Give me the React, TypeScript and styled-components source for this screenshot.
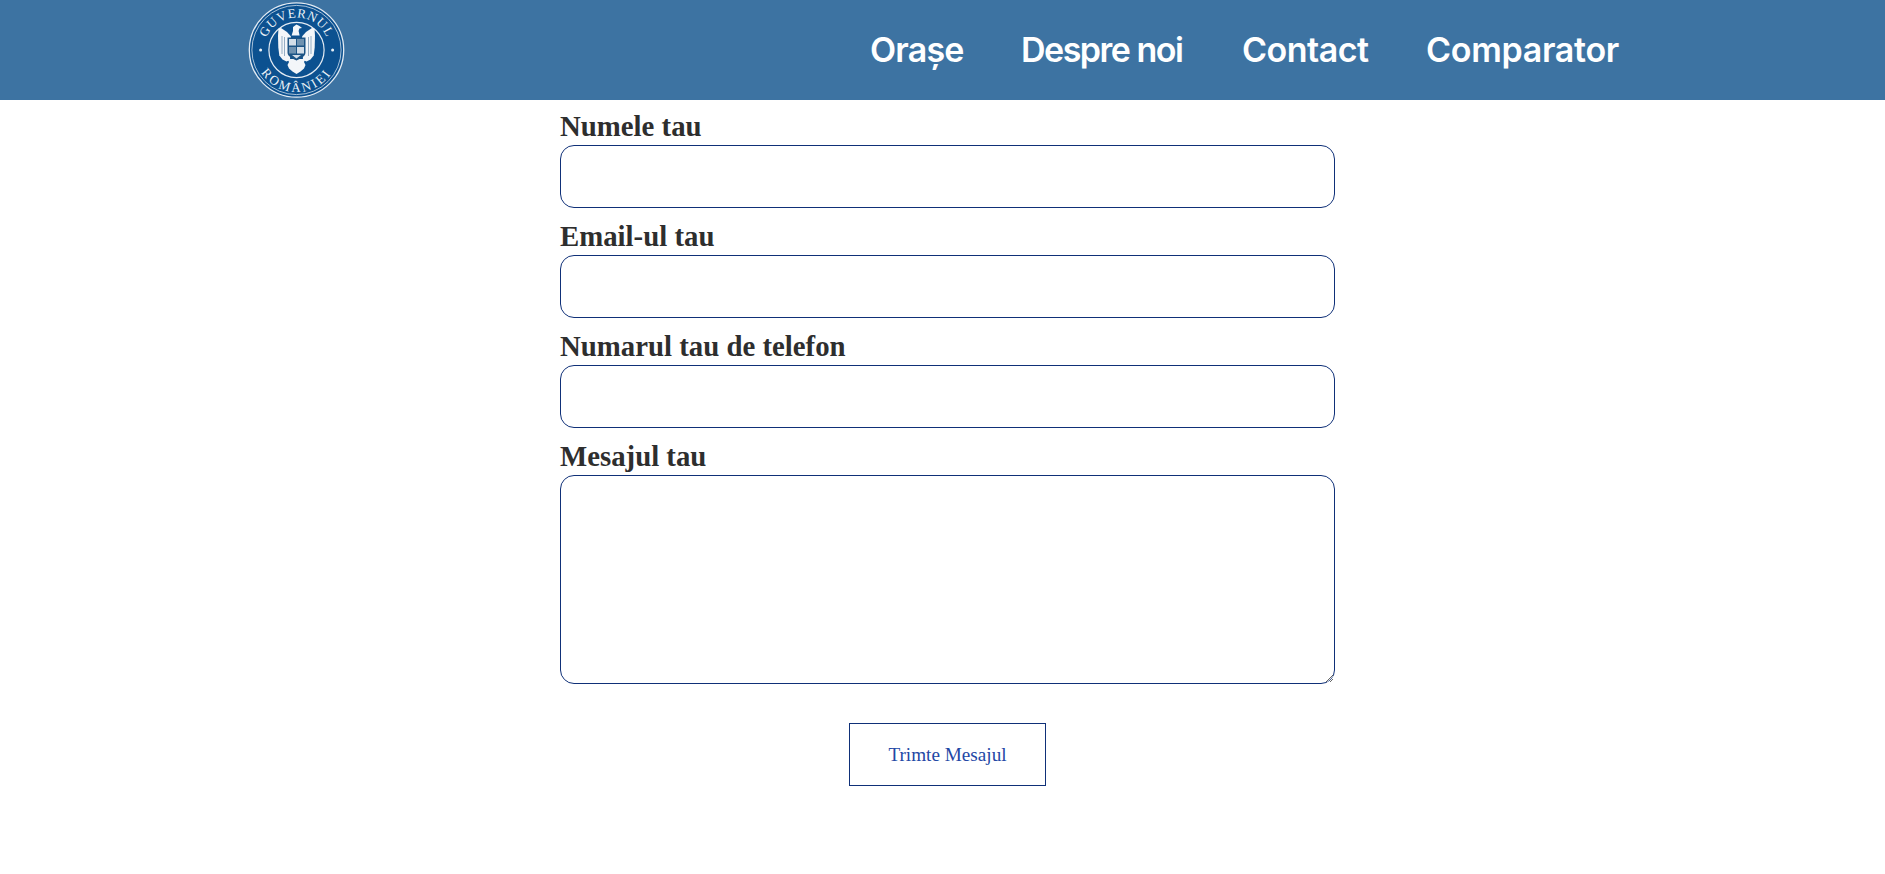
import React from "react";
import styled, { createGlobalStyle } from "styled-components";

const Global = createGlobalStyle`
  * { box-sizing: border-box; }
  html, body { margin: 0; padding: 0; background: #fff; }
  body { font-family: "Liberation Serif", "Times New Roman", serif; }
`;

const Header = styled.header`
  height: 100px;
  background: #3d73a2;
  display: flex;
  align-items: center;
  justify-content: space-between;
  padding: 0 266px 0 248px;
`;

const Nav = styled.nav`
  display: grid;
  grid-template-columns: 93px 163px 126px 193px;
  column-gap: 58px;
  margin-top: -2px;
`;

const NavLink = styled.a<{ $spacing: number }>`
  font-family: Inter, "Noto Sans", sans-serif;
  font-weight: 600;
  font-size: 34px;
  letter-spacing: ${(p) => p.$spacing}px;
  white-space: nowrap;
  color: #fff;
  text-decoration: none;
`;

const Form = styled.form`
  width: 775px;
  margin-left: 560px;
  padding-top: 9px;
  display: flex;
  flex-direction: column;
`;

const Field = styled.div`
  display: flex;
  flex-direction: column;
  margin-bottom: 11px;
`;

const Label = styled.label`
  font-size: 28.8px;
  font-weight: 700;
  line-height: 35px;
  margin-bottom: 1px;
  color: #2e2e2e;
`;

const TextInput = styled.input`
  display: block;
  width: 100%;
  height: 63px;
  border: 1px solid #0f3078;
  border-radius: 14px;
  background: #fff;
  outline: none;
`;

const TextArea = styled.textarea`
  display: block;
  width: 100%;
  height: 209px;
  border: 1px solid #0f3078;
  border-radius: 14px;
  background: #fff;
  outline: none;
`;

const Submit = styled.button`
  align-self: center;
  width: 197px;
  height: 63px;
  margin-top: 28px;
  border: 1px solid #0f3078;
  background: #fff;
  color: #2347a5;
  font-family: "Liberation Serif", serif;
  font-size: 19.2px;
  cursor: pointer;
`;

const Logo = () => (
  <svg width="98" height="98" viewBox="0 0 98 98" aria-label="Guvernul României">
    <defs>
      <path id="arcTop" d="M 16 49 A 32.5 32.5 0 0 1 81 49" />
      <path id="arcBottom" d="M 6.5 49 A 42 42 0 0 0 90.5 49" />
    </defs>
    <circle cx="48.5" cy="49" r="47.2" fill="#0c5190" stroke="#e3ebf3" strokeWidth="1.3" />
    <circle cx="48.5" cy="49" r="44.6" fill="none" stroke="#cfdeeb" strokeWidth="0.8" />
    <circle cx="48.5" cy="49" r="27.6" fill="none" stroke="#e3ebf3" strokeWidth="1.2" />
    <text fontFamily="Liberation Serif, serif" fontSize="13" fill="#eaf1f7" letterSpacing="0.7">
      <textPath href="#arcTop" startOffset="50%" textAnchor="middle">GUVERNUL</textPath>
    </text>
    <text fontFamily="Liberation Serif, serif" fontSize="13" fill="#eaf1f7" letterSpacing="2.4">
      <textPath href="#arcBottom" startOffset="50%" textAnchor="middle">ROMÂNIEI</textPath>
    </text>
    <circle cx="12.6" cy="49" r="1.5" fill="#eaf1f7" />
    <circle cx="84.6" cy="49" r="1.5" fill="#eaf1f7" />
    <path d="M45 26l3.500-2.500 3 1.500 2.500 2-2.600.6-.8 2.400 1 4.400-8 0 1.400-4.500z" fill="#f3f6f9" />
    <path d="M43 35.500l-4-4.500-6-4-2.500.5-.5 7 .3 12 1 8 3.200 4 4 2 3.500-1.500z" fill="#f3f6f9" />
    <path d="M54 35.500l4-4.500 6-4 2.500.5.500 7-.3 12-1 8-3.200 4-4 2-3.500-1.500z" fill="#f3f6f9" />
    <path d="M39.500 58h18l-1.500 3 1.500 3-1.500 3.500-3.500 3-4 2.500-4-2.500-3.500-3-1.500-3.500 1.500-3z" fill="#f3f6f9" />
    <path d="M34 35v18M36.500 36v19M60.500 36v19M63 35v18" stroke="#8aa6be" strokeWidth="0.9" />
    <path d="M39.500 36.500h18v15c0 4-5 6-9 8-4-2-9-4-9-8z" fill="#1c5485" />
    <rect x="41" y="38" width="7" height="6.500" fill="#d3dee8" />
    <rect x="49" y="38" width="7" height="6.500" fill="#6f92b0" />
    <rect x="41" y="46" width="7" height="6.500" fill="#6f92b0" />
    <rect x="49" y="46" width="7" height="6.500" fill="#d3dee8" />
    <path d="M44 54h9l-4.500 3.500z" fill="#d3dee8" />
  </svg>
);

export default function App() {
  return (
    <>
      <Global />
      <Header>
        <Logo />
        <Nav>
          <NavLink href="#" $spacing={-0.8}>Orașe</NavLink>
          <NavLink href="#" $spacing={-1.5}>Despre noi</NavLink>
          <NavLink href="#" $spacing={-0.5}>Contact</NavLink>
          <NavLink href="#" $spacing={-0.3}>Comparator</NavLink>
        </Nav>
      </Header>
      <Form onSubmit={(e) => e.preventDefault()}>
        <Field>
          <Label htmlFor="name">Numele tau</Label>
          <TextInput id="name" type="text" />
        </Field>
        <Field>
          <Label htmlFor="email">Email-ul tau</Label>
          <TextInput id="email" type="email" />
        </Field>
        <Field>
          <Label htmlFor="phone">Numarul tau de telefon</Label>
          <TextInput id="phone" type="tel" />
        </Field>
        <Field>
          <Label htmlFor="message">Mesajul tau</Label>
          <TextArea id="message" />
        </Field>
        <Submit type="submit">Trimte Mesajul</Submit>
      </Form>
    </>
  );
}
